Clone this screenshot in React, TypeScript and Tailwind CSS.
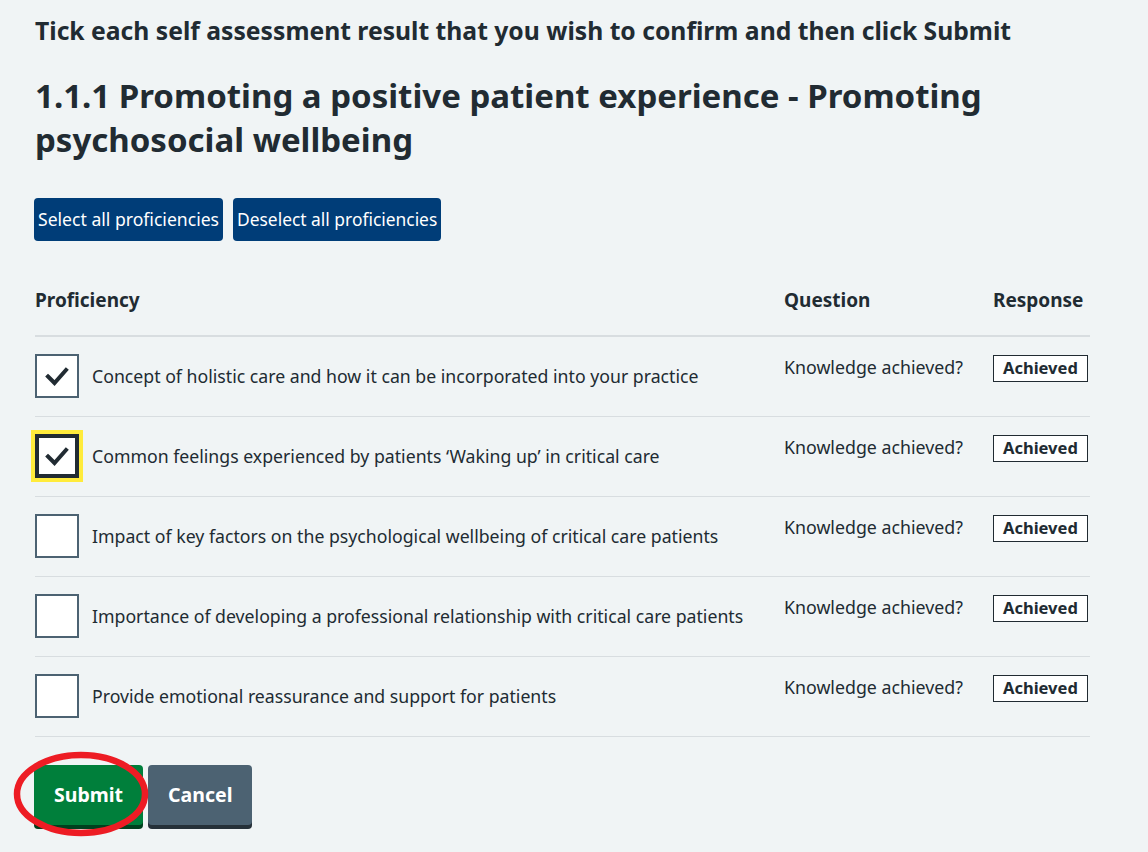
import React, { useState } from "react";

const rows = [
  "Concept of holistic care and how it can be incorporated into your practice",
  "Common feelings experienced by patients \u2018Waking up\u2019 in critical care",
  "Impact of key factors on the psychological wellbeing of critical care patients",
  "Importance of developing a professional relationship with critical care patients",
  "Provide emotional reassurance and support for patients",
];

const Tick = () => (
  <svg width="26" height="22" viewBox="0 0 26 22" fill="none">
    <path d="M4 11.5 L10.5 18 L22 5" stroke="#212b32" strokeWidth="4" strokeLinecap="square" />
  </svg>
);

const App = () => {
  const [checked, setChecked] = useState([true, true, false, false, false]);
  const focused = 1;

  const toggle = (i: number) =>
    setChecked((prev) => prev.map((c, j) => (j === i ? !c : c)));

  return (
    <div className="min-h-screen bg-[#f0f4f5] text-[#212b32] font-['Noto_Sans',sans-serif] px-[35px] pt-[14px]">
      <p className="text-[24.7px] font-bold leading-[34px]">
        Tick each self assessment result that you wish to confirm and then click Submit
      </p>

      <h2 className="mt-[26px] text-[33px] font-bold leading-[44px] max-w-[980px]">
        1.1.1 Promoting a positive patient experience - Promoting psychosocial wellbeing
      </h2>

      <div className="mt-[36px] flex gap-[10px] -ml-px">
        <button className="h-[43px] px-[4px] rounded-[4px] bg-[#003d78] text-white text-[17.6px] leading-none">
          Select all proficiencies
        </button>
        <button className="h-[43px] px-[4px] rounded-[4px] bg-[#003d78] text-white text-[17.4px] leading-none">
          Deselect all proficiencies
        </button>
      </div>

      <table className="mt-[39px] w-[1055px] table-fixed border-collapse">
        <colgroup>
          <col />
          <col className="w-[209px]" />
          <col className="w-[97px]" />
        </colgroup>
        <thead>
          <tr className="border-b-2 border-[#d8dde0]">
            <th className="text-left font-bold text-[19px] h-[56px] pb-[15px] align-middle">Proficiency</th>
            <th className="text-left font-bold text-[19px] pb-[15px]">Question</th>
            <th className="text-left font-bold text-[19px] pb-[15px]">Response</th>
          </tr>
        </thead>
        <tbody>
          {rows.map((text, i) => (
            <tr key={i} className="border-b border-[#d8dde0] h-[80px]">
              <td className="align-middle">
                <label className="flex items-center gap-[13px] cursor-pointer" onClick={() => toggle(i)}>
                  {i === focused ? (
                    <span className="w-[52px] h-[52px] -ml-[4px] -mr-[4px] bg-[#ffeb3b] flex items-center justify-center shrink-0">
                      <span className="w-[44px] h-[44px] border-[4px] border-[#212b32] bg-white flex items-center justify-center">
                        {checked[i] && <Tick />}
                      </span>
                    </span>
                  ) : (
                    <span className="w-[44px] h-[44px] border-2 border-[#4c6272] bg-white flex items-center justify-center shrink-0">
                      {checked[i] && <Tick />}
                    </span>
                  )}
                  <span className="text-[17.7px] leading-[24px]">{text}</span>
                </label>
              </td>
              <td className="align-top pt-[18px] text-[17.8px] leading-[24px]">Knowledge achieved?</td>
              <td className="align-top pt-[18px]">
                <span className="inline-block border border-[#212b32] bg-white px-[9px] h-[27px] leading-[24px] text-[16.5px] font-bold">
                  Achieved
                </span>
              </td>
            </tr>
          ))}
        </tbody>
      </table>

      <div className="relative mt-[28px] flex gap-[5px] -ml-px">
        <button className="h-[60px] px-[20px] rounded-[4px] bg-[#007f3b] text-white text-[19.5px] font-bold shadow-[0_4px_0_#00401e]">
          Submit
        </button>
        <button className="h-[60px] px-[20px] rounded-[4px] bg-[#4c6272] text-white text-[19.5px] font-bold shadow-[0_4px_0_#263139]">
          Cancel
        </button>
        <svg className="absolute -left-[21px] -top-[15px] pointer-events-none" width="140" height="92" viewBox="0 0 140 92">
          <ellipse cx="68" cy="44" rx="64" ry="39" fill="none" stroke="#ed1c24" strokeWidth="6.5" />
        </svg>
      </div>
    </div>
  );
};

export default App;
